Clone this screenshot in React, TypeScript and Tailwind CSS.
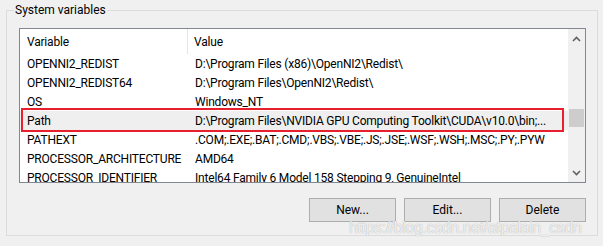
import React from 'react';

const ROWS = [
  { name: 'OPENNI2_REDIST', value: 'D:\\Program Files (x86)\\OpenNI2\\Redist\\' },
  { name: 'OPENNI2_REDIST64', value: 'D:\\Program Files\\OpenNI2\\Redist\\' },
  { name: 'OS', value: 'Windows_NT' },
  { name: 'Path', value: 'D:\\Program Files\\NVIDIA GPU Computing Toolkit\\CUDA\\v10.0\\bin;...', marked: true },
  { name: 'PATHEXT', value: '.COM;.EXE;.BAT;.CMD;.VBS;.VBE;.JS;.JSE;.WSF;.WSH;.MSC;.PY;.PYW' },
  { name: 'PROCESSOR_ARCHITECTURE', value: 'AMD64' },
  { name: 'PROCESSOR_IDENTIFIER', value: 'Intel64 Family 6 Model 158 Stepping 9, GenuineIntel' },
];

const Chevron = ({ down }: { down?: boolean }) => (
  <svg width="9" height="6" viewBox="0 0 9 6" className={down ? 'rotate-180' : ''}>
    <path d="M1 5 L4.5 1.5 L8 5" fill="none" stroke="#606060" strokeWidth="1.6" />
  </svg>
);

const Button = ({ label }: { label: string }) => (
  <button className="w-[87px] h-[24px] bg-[#e1e1e1] border border-[#adadad] text-[12px] text-black leading-none">
    {label}
  </button>
);

export default function App() {
  return (
    <div className="relative w-[603px] h-[246px] overflow-hidden bg-[#f0f0f0] text-black font-['Roboto',sans-serif]">
      <fieldset className="ml-[6px] mt-[2px] w-[592px] h-[234px] border border-[#dcdcdc]">
        <legend className="ml-[7px] px-[1px] text-[12px] leading-[16px]">System variables</legend>

        {/* list view */}
        <div className="ml-[12px] mt-[10px] w-[567px] h-[155px] flex border border-[#828790] bg-white">
          <div className="flex-1 min-w-0 flex flex-col overflow-hidden text-[12px] tracking-[-0.2px]">
            <div className="flex h-[25px] shrink-0 items-center">
              <div className="w-[168px] shrink-0 h-full pl-[7px] flex items-center border-r border-[#e5e5e5]">Variable</div>
              <div className="flex-1 pl-[6px]">Value</div>
            </div>
            {ROWS.map((row) => (
              <div
                key={row.name}
                className={`relative flex h-[19px] shrink-0 items-center whitespace-nowrap ${row.marked ? 'bg-[#efefef]' : ''}`}
              >
                <div className="w-[168px] shrink-0 pl-[7px]">{row.name}</div>
                <div className="flex-1 min-w-0 overflow-hidden pl-[7px]">{row.value}</div>
                {row.marked && (
                  <span className="absolute left-[1px] right-[4px] -top-[3px] -bottom-[2px] border-2 border-[#e8202d]" />
                )}
              </div>
            ))}
          </div>

          {/* scrollbar */}
          <div className="w-[17px] shrink-0 flex flex-col bg-[#f0f0f0]">
            <div className="h-[17px] flex items-center justify-center pt-[2px]">
              <Chevron />
            </div>
            <div className="flex-1 pt-[63px]">
              <div className="mx-[1px] h-[18px] bg-[#cdcdcd]" />
            </div>
            <div className="h-[17px] flex items-center justify-center pb-[1px]">
              <Chevron down />
            </div>
          </div>
        </div>

        <div className="mt-[15px] pr-[11px] flex justify-end gap-[8px]">
          <Button label="New..." />
          <Button label="Edit..." />
          <Button label="Delete" />
        </div>
      </fieldset>

      {/* watermark */}
      <div className="absolute left-[349px] top-[216px] whitespace-nowrap text-[16px] tracking-[-0.4px] text-white/80 font-['Liberation_Sans',sans-serif] [text-shadow:0_0_1px_#9a9a9a]">
        https://blog.csdn.net/atpalain_csdn
      </div>
    </div>
  );
}
